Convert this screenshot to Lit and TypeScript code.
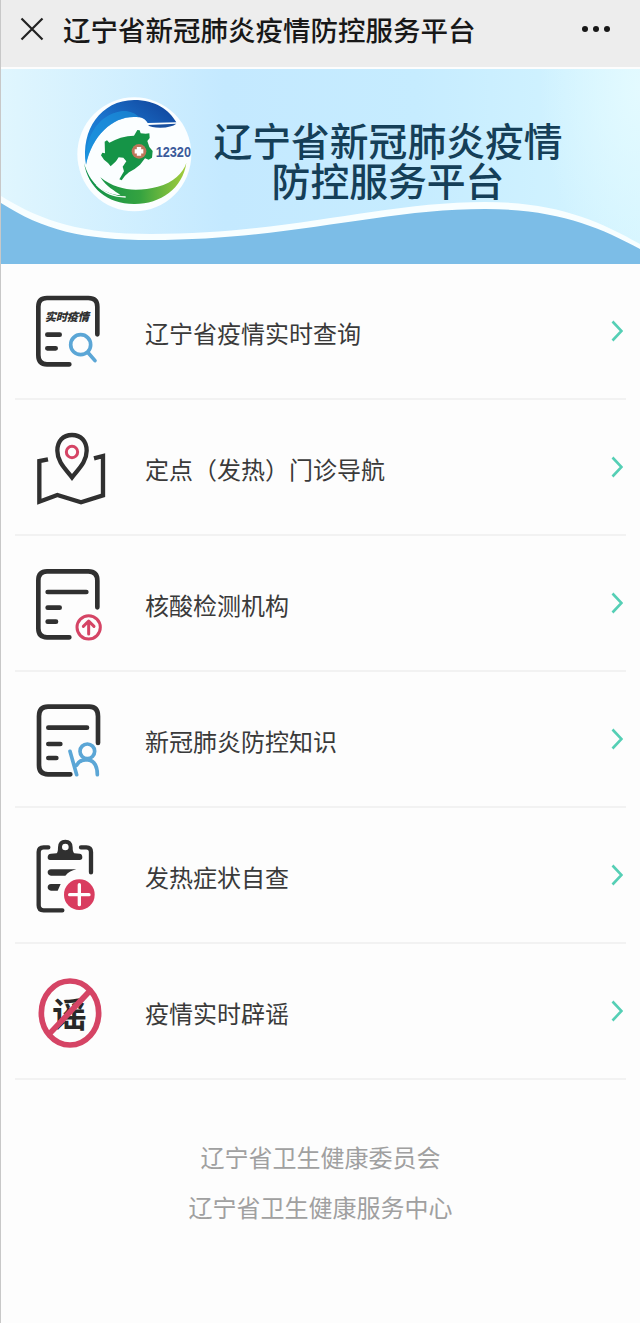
import { css, html, LitElement, svg } from "lit";
import { customElement } from "lit/decorators.js";

const icons = {
  search: svg`
    <svg class="icon" viewBox="0 4 270 270">
      <g class="ink" stroke-width="14">
        <path d="M133 239H66Q40 239 40 211V66Q40 40 66 40H190Q217 40 217 66V149" />
        <path d="M67 150H104M67 191H92" />
      </g>
      <text class="tag" x="59" y="108" textLength="133">实时疫情</text>
      <g class="blue" stroke-width="11">
        <circle cx="167" cy="180" r="30" />
        <path d="M190 205L210 228" />
      </g>
    </svg>`,
  map: svg`
    <svg class="icon" viewBox="0 -9 270 270">
      <g class="ink sharp" stroke-width="13">
        <path d="M69 103L43 108V230L97 210L168 232L234 211V93L207 100" />
        <path d="M141 157C122 132 97 111 97 77C97 48 114 30 141 30C168 30 185 48 185 77C185 111 160 132 141 157Z" />
      </g>
      <circle class="red" cx="141" cy="81" r="17" stroke-width="9" />
    </svg>`,
  upload: svg`
    <svg class="icon" viewBox="0 -6 270 270">
      <g class="ink" stroke-width="14">
        <path d="M133 232H66Q40 232 40 205V62Q40 34 66 34H190Q217 34 217 62V142" />
        <path d="M68 96H184M68 143H104M68 185H93" />
      </g>
      <g class="red" stroke-width="9">
        <circle cx="191" cy="202" r="35" />
        <path d="M191 222V184M175 199L191 183L207 199" />
      </g>
    </svg>`,
  person: svg`
    <svg class="icon" viewBox="0 -3 270 270">
      <g class="ink" stroke-width="14">
        <path d="M136 238H69Q42 238 42 211V64Q42 35 69 35H193Q219 35 219 64V144" />
        <path d="M70 98H186M70 147H106M70 189H94" />
      </g>
      <g class="blue" stroke-width="11">
        <circle cx="187" cy="169" r="22" />
        <path d="M135 169L155 239M155 211Q163 194 185 194Q217 196 217 239" />
      </g>
    </svg>`,
  clipboard: svg`
    <svg class="icon" viewBox="0 0 270 270">
      <g class="ink" stroke-width="13">
        <path d="M70 52H56Q41 52 41 66V226Q41 241 56 241H112M168 52H184Q198 52 198 66V127" />
      </g>
      <path
        class="solid"
        fill-rule="evenodd"
        d="M75 90Q68 90 68 82Q68 72 78 71L95 70Q99 67 99 52Q99 29 121 29Q143 29 143 52Q143 67 148 70L164 71Q172 72 172 82Q172 90 164 90ZM121 41A10 10 0 1 0 121 61A10 10 0 1 0 121 41Z"
      />
      <path class="solid" d="M78 118H154Q134 122 121 137H78Q68 136 68 127Q68 119 78 118ZM78 162H107L98 182H78Q68 181 68 172Q68 163 78 162Z" />
      <circle class="red-fill" cx="163" cy="194" r="46" />
      <path class="white" d="M163 164V224M134 194H192" stroke-width="10" />
    </svg>`,
  rumor: svg`
    <svg class="icon" viewBox="0 -12 270 270">
      <text class="glyph" x="81" y="172">谣</text>
      <g class="red sharp" stroke-width="17">
        <ellipse cx="135" cy="129" rx="86" ry="96" />
        <path d="M71 194L197 60" />
      </g>
    </svg>`,
};

const items = [
  { label: "辽宁省疫情实时查询", icon: icons.search },
  { label: "定点（发热）门诊导航", icon: icons.map },
  { label: "核酸检测机构", icon: icons.upload },
  { label: "新冠肺炎防控知识", icon: icons.person },
  { label: "发热症状自查", icon: icons.clipboard },
  { label: "疫情实时辟谣", icon: icons.rumor },
];

@customElement("service-banner")
export class ServiceBanner extends LitElement {
  render() {
    return html`
      <svg class="wave" viewBox="0 0 640 195" preserveAspectRatio="none">
        <path
          fill="#f8feff"
          d="M0 127C42 153 82 165 150 165C290 165 380 133 485 133C555 133 598 151 640 175V195H0Z"
        />
        <path
          fill="#7cbde7"
          d="M0 134C42 161 82 171 150 171C290 171 380 140 485 140C555 140 598 157 640 180V195H0Z"
        />
      </svg>
      <svg class="logo" viewBox="20 18 345 351">
        <defs>
          <linearGradient id="sky" x1="0" y1="1" x2="1" y2="0">
            <stop offset="0" stop-color="#1a8fdc" />
            <stop offset="0.45" stop-color="#1b75ce" />
            <stop offset="1" stop-color="#103f96" />
          </linearGradient>
          <linearGradient id="leaf">
            <stop offset="0" stop-color="#0c8f4b" />
            <stop offset="0.55" stop-color="#35a340" />
            <stop offset="1" stop-color="#a5cd3c" />
          </linearGradient>
        </defs>
        <circle cx="192" cy="193" r="171" fill="#fbfeff" />
        <path
          fill="url(#sky)"
          d="M47 224C30 120 92 31 191 30C256 30 296 59 318 97L232 99Q225 86 207 82C137 71 67 128 47 224Z"
        />
        <path fill="#1b9be2" d="M47 224C41 144 83 75 151 64C174 61 194 69 207 82C137 71 67 128 47 224Z" opacity="0.55" />
        <path fill="#174f9f" d="M233 105L318 101Q304 112 270 113Q241 113 233 105Z" />
        <path
          fill="url(#leaf)"
          d="M41 219C57 277 94 311 151 316C134 303 108 290 90 262C145 306 205 304 262 290C310 278 338 249 348 219C337 296 269 343 191 342C110 341 54 294 41 219Z"
        />
        <path fill="none" stroke="#fbfeff" stroke-width="4" d="M78 284Q112 321 166 321" />
        <path
          fill="#159447"
          d="M92 196L96 188L104 190L103 155L110 151L117 158L134 150L151 143L172 139L191 137L201 120L208 121L211 130L226 131L237 130L238 144L231 153L237 171L247 183L245 203L235 209L224 205L209 224L193 237L176 247L164 257L154 271L147 268L161 244L157 230L168 214L159 203L145 202L137 214L121 229L113 219L101 209Z"
        />
        <circle cx="206" cy="184" r="22" fill="#bd765b" />
        <path d="M206 171V197M193 184H219" stroke="#fff" stroke-width="13" />
        <text x="256" y="201" textLength="106" lengthAdjust="spacingAndGlyphs">12320</text>
      </svg>
      <h1>
        <div>辽宁省新冠肺炎疫情</div>
        <div>防控服务平台</div>
      </h1>
    `;
  }

  static styles = css`
    :host {
      position: relative;
      display: flex;
      align-items: flex-start;
      box-sizing: border-box;
      height: 195px;
      padding: 27px 0 0 76px;
      background:
        radial-gradient(ellipse 100px 190px at 100% 10%, #e3faff, transparent),
        linear-gradient(90deg, #e0f6fe, #c4e9ff 35%, #c6ecff 65%, #d5f5ff);
    }

    .wave {
      position: absolute;
      left: 0;
      bottom: 0;
      width: 100%;
      height: 100%;
    }

    .logo {
      position: relative;
      width: 115px;
      height: 117px;
      overflow: visible;
    }

    .logo text {
      fill: #3c5b9b;
      font: bold 44px "Liberation Sans", Arial, sans-serif;
    }

    h1 {
      position: relative;
      width: 352px;
      margin: 23px 0 0 20px;
      color: #153f58;
      font-size: 38.8px;
      font-weight: 500;
      line-height: 40px;
      text-align: center;
      white-space: nowrap;
    }
  `;
}

@customElement("app-root")
export class AppRoot extends LitElement {
  render() {
    return html`
      <header>
        <svg class="close" viewBox="0 0 24 24"><path d="M1.5 1.5L22.5 22.5M22.5 1.5L1.5 22.5" /></svg>
        <span class="title">辽宁省新冠肺炎疫情防控服务平台</span>
        <span class="more"><i></i><i></i><i></i></span>
      </header>
      <service-banner></service-banner>
      <ul>
        ${items.map(
          (item) => html`
            <li>
              ${item.icon}
              <span class="label">${item.label}</span>
              <svg class="arrow" viewBox="0 0 12 22"><path d="M1.5 1.5L10.5 11L1.5 20.5" /></svg>
            </li>
          `
        )}
      </ul>
      <footer>
        <div>辽宁省卫生健康委员会</div>
        <div>辽宁省卫生健康服务中心</div>
      </footer>
    `;
  }

  static styles = css`
    :host {
      display: block;
      box-sizing: border-box;
      height: 1323px;
      overflow: hidden;
      border-left: 1px solid #c8c8c8;
      background: #fdfdfd;
      font-family: "Noto Sans CJK SC", sans-serif;
    }

    header {
      display: flex;
      align-items: center;
      box-sizing: border-box;
      height: 69px;
      padding: 0 30px 10px 19px;
      border-bottom: 2px solid #fdfdfd;
      background: #ededed;
    }

    .close {
      width: 24px;
      height: 24px;
      fill: none;
      stroke: #222;
      stroke-width: 2.2;
    }

    .title {
      margin-left: 19px;
      color: #181818;
      font-size: 27.5px;
      font-weight: 500;
      line-height: 40px;
      white-space: nowrap;
    }

    .more {
      display: flex;
      gap: 5px;
      margin-left: auto;
    }

    .more i {
      width: 6px;
      height: 6px;
      border-radius: 50%;
      background: #181818;
    }

    ul {
      margin: 0;
      padding: 0 14px;
      list-style: none;
    }

    li {
      display: flex;
      align-items: center;
      box-sizing: border-box;
      height: 136px;
      padding-left: 10px;
      border-bottom: 2px solid #f2f2f2;
    }

    .icon {
      width: 90px;
      height: 90px;
      overflow: visible;
    }

    .ink,
    .blue,
    .red,
    .white {
      fill: none;
      stroke-linecap: round;
      stroke-linejoin: round;
    }

    .ink {
      stroke: #303030;
    }

    .blue {
      stroke: #5ba6d6;
    }

    .red {
      stroke: #d54465;
    }

    .white {
      stroke: #fff;
    }

    .sharp {
      stroke-linecap: butt;
      stroke-linejoin: miter;
    }

    .solid {
      fill: #303030;
    }

    .red-fill {
      fill: #d93c5f;
    }

    .tag {
      fill: #303030;
      font-size: 34px;
      font-style: italic;
      font-weight: 900;
    }

    .glyph {
      fill: #282828;
      font-size: 104px;
      font-weight: 700;
    }

    .label {
      margin: 4px 0 0 30px;
      color: #3a3a3a;
      font-size: 24px;
      line-height: 34px;
    }

    .arrow {
      width: 12px;
      height: 22px;
      margin-left: auto;
      margin-right: 3px;
      fill: none;
      stroke: #55cfb5;
      stroke-width: 2.6;
    }

    footer {
      padding-top: 52px;
      color: #a0a0a0;
      font-size: 24px;
      font-weight: 400;
      line-height: 50px;
      text-align: center;
    }
  `;
}
